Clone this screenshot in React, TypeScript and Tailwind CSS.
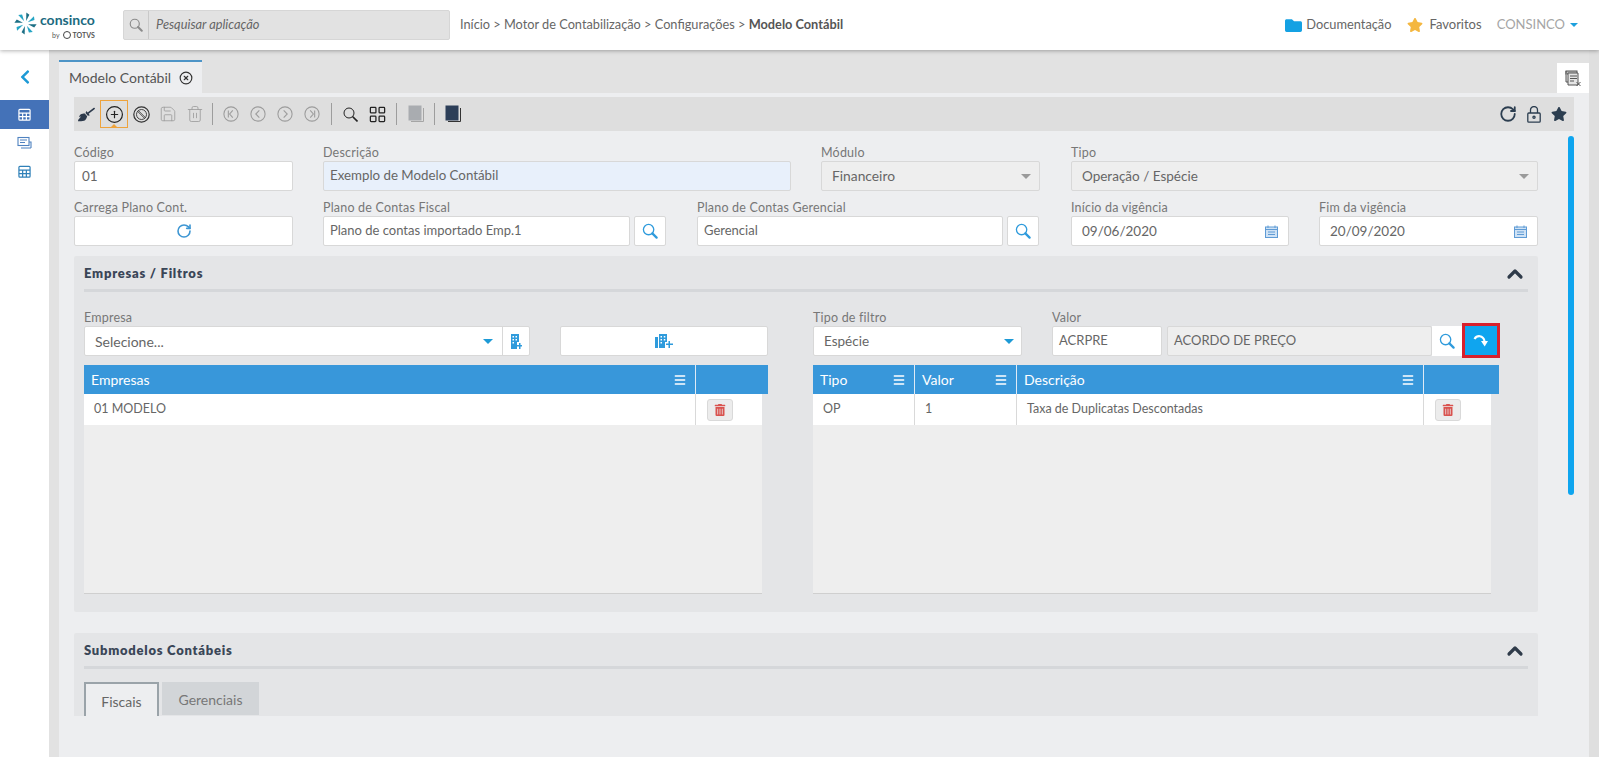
import { CirclePlus, CircleX, ChevronUp, LayoutGrid, Menu, RotateCw, Save, Trash2 } from "lucide-react";
import { FaBroom, FaChevronLeft, FaFolder, FaStar, FaTrashAlt } from "react-icons/fa";
import type { ReactNode } from "react";

const font = { fontFamily: "Lato, 'Open Sans', sans-serif" };

function Logo() {
  const rays = [0, 45, 90, 135, 180, 225, 270, 315];
  return (
    <div className="flex items-start gap-[3px] ml-[14px] w-[93px]">
      <svg width="23" height="23" viewBox="0 0 22 22" className="mt-[1px] shrink-0">
        {rays.map((r, i) => (
          <path
            key={r}
            d="M11 8.5 L9.2 0.5 L12.6 2 Z"
            fill={i % 2 ? "#25a5c4" : "#1d6f85"}
            transform={`rotate(${r + 14} 11 11)`}
          />
        ))}
      </svg>
      <div className="flex flex-col items-end -mt-[1px] leading-none">
        <span className="text-[14px] font-bold text-[#1c6a80] leading-[20px]">consinco</span>
        <span className="flex items-center gap-[2px] text-[7px] font-bold text-[#555] mt-[1px]">
          <span className="font-normal mr-[1px]">by</span>
          <span className="w-[8px] h-[8px] rounded-full border border-[#444]" />
          TOTVS
        </span>
      </div>
    </div>
  );
}

function SearchIcon({ color, size = 16 }: { color: string; size?: number }) {
  return (
    <svg width={size} height={size} viewBox="0 0 17 17" fill="none" stroke={color}>
      <circle cx="7" cy="7" r="5.5" strokeWidth="1.4" />
      <path d="M11 11 L15.5 15.5" strokeWidth="2.4" strokeLinecap="round" />
    </svg>
  );
}

function Header() {
  return (
    <header className="relative z-10 h-[50px] bg-white flex items-center shadow-[0_1px_4px_rgba(0,0,0,0.3)] shrink-0">
      <Logo />
      <div className="ml-[16px] w-[327px] h-[30px] flex items-center bg-[#e2e2e2] border border-[#d6d6d6] rounded-[2px]">
        <div className="w-[25px] h-full flex items-center justify-center border-r border-[#c9c9c9]">
          <SearchIcon color="#8b8b8b" size={14} />
        </div>
        <span className="ml-[7px] text-[12.8px] italic text-[#666]">Pesquisar aplicação</span>
      </div>
      <div className="ml-[10px] text-[12.75px] text-[#666]">
        Início &gt; Motor de Contabilização &gt; Configurações &gt;{" "}
        <span className="font-bold text-[#555]">Modelo Contábil</span>
      </div>
      <div className="ml-auto flex items-center text-[13px] text-[#666] pr-[21px]">
        <FaFolder size={17} className="text-[#14a1e3] mr-[4px]" />
        <span className="text-[12.8px]">Documentação</span>
        <FaStar size={16} className="text-[#f4b740] ml-[16px] mr-[6px]" />
        <span>Favoritos</span>
        <span className="ml-[15px] text-[#a5a5a5]">CONSINCO</span>
        <span className="ml-[5px] w-0 h-0 border-x-[4px] border-x-transparent border-t-[4px] border-t-[#1da0dd]" />
      </div>
    </header>
  );
}

function TableIcon({ color }: { color: string }) {
  return (
    <svg width="13" height="13" viewBox="0 0 14 14" fill="none" stroke={color} strokeWidth="1.3">
      <rect x="1" y="1.5" width="12" height="11.5" rx="1" />
      <path d="M1 5.5H13M1 9.2H13M5 5.5V13M9 5.5V13" />
    </svg>
  );
}

function Sidebar() {
  return (
    <aside className="w-[49px] shrink-0 bg-white flex flex-col">
      <div className="h-[50px] flex items-center justify-center">
        <FaChevronLeft size={16} className="text-[#1d9ad6] mt-[4px]" />
      </div>
      <div className="h-[29px] bg-[#4472b8] flex items-center justify-center">
        <TableIcon color="#ffffff" />
      </div>
      <div className="h-[28px] flex items-center justify-center">
        <svg width="15" height="14" viewBox="0 0 15 14" fill="none" stroke="#4f82c0" strokeWidth="1.1">
          <rect x="1" y="1.5" width="11" height="8" />
          <path d="M3 4H10M3 6.5H8M4 12H14M12 6H14V12" />
        </svg>
      </div>
      <div className="h-[28px] flex items-center justify-center">
        <TableIcon color="#2f80b8" />
      </div>
    </aside>
  );
}

function CircleNav({ kind }: { kind: "first" | "prev" | "next" | "last" }) {
  const d = {
    first: "M11 5 L7.5 9 L11 13 M6 5V13",
    prev: "M10.5 5 L6.5 9 L10.5 13",
    next: "M7.5 5 L11.5 9 L7.5 13",
    last: "M7 5 L10.5 9 L7 13 M12 5V13",
  }[kind];
  return (
    <svg width="16" height="16" viewBox="0 0 18 18" fill="none" stroke="#9c9c9c" strokeWidth="1.2">
      <circle cx="9" cy="9" r="8" />
      <path d={d} />
    </svg>
  );
}

function Sep({ left }: { left: string }) {
  return <span className={`block w-px h-[22px] bg-[#9d9d9d] ${left}`} />;
}

function Copies({ color, front, left }: { color: string; front: string; left: string }) {
  return (
    <svg width="17" height="18" viewBox="0 0 17 18" fill="none" stroke={color} strokeWidth="1" className={left}>
      <path d="M3 16.5H15.5V3" />
      <rect x="1" y="1" width="12" height="14" fill={front} stroke={front} />
    </svg>
  );
}

function Slot({ left, children }: { left: string; children: ReactNode }) {
  return <span className={`w-[16px] h-[18px] flex items-center justify-center ${left}`}>{children}</span>;
}

function Toolbar() {
  return (
    <div className="h-[34px] ml-[15px] w-[1500px] mt-[4px] bg-[#dedede] flex items-center pl-[4px] pr-[7px]">
      <FaBroom size={17} className="text-[#2d3a4c]" />
      <div className="relative ml-[5px] w-[28px] h-[28px] border border-[#eea33c] flex items-center justify-center">
        <CirclePlus size={19} strokeWidth={1.5} className="text-[#222]" />
        <span className="absolute bottom-0 left-[10px] w-0 h-0 border-x-[3px] border-x-transparent border-b-[3px] border-b-[#eea33c]" />
      </div>
      <svg width="17" height="17" viewBox="0 0 17 17" fill="none" stroke="#333" className="ml-[5px]">
        <circle cx="8.5" cy="8.5" r="7.7" strokeWidth="1.2" />
        <circle cx="8.5" cy="8.5" r="5" strokeWidth="0.9" />
        <path d="M4.6 5.4 L11.6 12.4 M5.4 4.6 L12.4 11.6" strokeWidth="0.8" />
      </svg>
      <Slot left="ml-[10px]">
        <Save size={18} strokeWidth={1.1} className="shrink-0 text-[#9c9c9c]" />
      </Slot>
      <Slot left="ml-[11px]">
        <Trash2 size={18} strokeWidth={1.1} className="shrink-0 text-[#9c9c9c]" />
      </Slot>
      <Sep left="ml-[9px]" />
      <span className="flex items-center gap-[11px] ml-[10px]">
        <CircleNav kind="first" />
        <CircleNav kind="prev" />
        <CircleNav kind="next" />
        <CircleNav kind="last" />
      </span>
      <Sep left="ml-[11px]" />
      <span className="ml-[11px]">
        <svg width="15" height="15" viewBox="0 0 15 15" fill="none" stroke="#222" className="block">
          <circle cx="6" cy="6" r="5" strokeWidth="1" />
          <path d="M9.5 9.5 L14.5 14.5" strokeWidth="1.6" />
        </svg>
      </span>
      <Slot left="ml-[11px]">
        <LayoutGrid size={19} strokeWidth={1.6} className="shrink-0 text-[#222]" />
      </Slot>
      <Sep left="ml-[11px]" />
      <Copies color="#a5a5a5" front="#a9acb0" left="ml-[11px]" />
      <Sep left="ml-[9px]" />
      <Copies color="#333" front="#2c3e58" left="ml-[10px]" />
      <div className="ml-auto flex items-center gap-[10px] text-[#2c3e50]">
        <RotateCw size={18} strokeWidth={2.4} />
        <svg width="14" height="17" viewBox="0 0 14 17" fill="none" stroke="currentColor" strokeWidth="1.3">
          <rect x="0.8" y="7" width="12.4" height="9.2" rx="1" />
          <path d="M3.5 7V4a3.5 3.5 0 0 1 7 0V7" />
          <circle cx="7" cy="11.2" r="1.1" />
        </svg>
        <FaStar size={16} />
      </div>
    </div>
  );
}

function Field({
  label,
  width,
  left,
  children,
}: {
  label: string;
  width: number | string;
  left?: string;
  children: ReactNode;
}) {
  return (
    <div className={`shrink-0 ${left ?? ""}`} style={{ width }}>
      <div className="text-[12.5px] text-[#777] h-[18px] leading-[20px] tracking-[0.2px]">{label}</div>
      {children}
    </div>
  );
}

function Box({
  children,
  className = "",
}: {
  children?: ReactNode;
  className?: string;
}) {
  return (
    <div
      className={`h-[30px] rounded-[2px] border border-[#d8d8d8] flex items-center text-[#666] ${className}`}
    >
      {children}
    </div>
  );
}

function SearchBtn() {
  return (
    <div className="w-[32px] h-[30px] bg-white border border-[#d8d8d8] rounded-[2px] flex items-center justify-center ml-[4px] shrink-0">
      <SearchIcon color="#2f9bdc" />
    </div>
  );
}

function Calendar() {
  return (
    <svg width="13" height="13" viewBox="0 0 13 13" className="ml-auto mr-[10px]" fill="#cfe2f5" stroke="#5f9bd5" strokeWidth="1">
      <rect x="0.5" y="2" width="12" height="10.5" />
      <path d="M0.5 4.5H12.5M3 0.5V3M10 0.5V3M3 7H10M3 9.5H10" />
    </svg>
  );
}

function Caret({ color = "#1d9ad6" }: { color?: string }) {
  return (
    <span
      className="block w-0 h-0 border-x-[5px] border-x-transparent border-t-[5px]"
      style={{ borderTopColor: color }}
    />
  );
}

function Building({ plus }: { plus?: boolean }) {
  return plus ? (
    <svg width="11" height="15" viewBox="0 0 11 15" fill="#2f9bdc">
      <path d="M0 0H8V8H6V15H0Z" />
      <path d="M1.5 2H3V3.5H1.5ZM4.5 2H6V3.5H4.5ZM1.5 5H3V6.5H1.5ZM4.5 5H6V6.5H4.5ZM1.5 8H3V9.5H1.5Z" fill="#fff" />
      <path d="M8 9V11H6V12.5H8V15H9.5V12.5H11V11H9.5V9Z" />
    </svg>
  ) : (
    <svg width="18" height="14" viewBox="0 0 18 14" fill="#2f9bdc">
      <path d="M0 3H3V14H0ZM4 0H12V8H10V14H4Z" />
      <path d="M5.5 2H7V3.5H5.5ZM8.8 2H10.3V3.5H8.8ZM5.5 5H7V6.5H5.5ZM8.8 5H10.3V6.5H8.8ZM5.5 8H7V9.5H5.5Z" fill="#fff" />
      <path d="M13.5 7V9.5H11V11H13.5V14H15V11H18V9.5H15V7Z" />
    </svg>
  );
}

function FormFields() {
  return (
    <div className="ml-[15px] w-[1464px]">
      <div className="flex mt-[12px]">
        <Field label="Código" width={219}>
          <Box className="bg-white pl-[7px] text-[13.5px]">01</Box>
        </Field>
        <Field label="Descrição" width={468} left="ml-[30px]">
          <Box className="bg-[#e8f0fb] pl-[6px] text-[#333] text-[13.3px]">Exemplo de Modelo Contábil</Box>
        </Field>
        <Field label="Módulo" width={219} left="ml-[30px]">
          <Box className="bg-[#eeeeee] pl-[10px] pr-[8px] justify-between text-[13.8px]">
            Financeiro
            <Caret color="#9a9a9a" />
          </Box>
        </Field>
        <Field label="Tipo" width={467} left="ml-[31px]">
          <Box className="bg-[#eeeeee] pl-[10px] pr-[8px] justify-between text-[13.5px]">
            Operação / Espécie
            <Caret color="#9a9a9a" />
          </Box>
        </Field>
      </div>
      <div className="flex mt-[7px]">
        <Field label="Carrega Plano Cont." width={219}>
          <Box className="bg-white justify-center">
            <RotateCw size={16} strokeWidth={2.4} className="text-[#3d96d3]" />
          </Box>
        </Field>
        <Field label="Plano de Contas Fiscal" width={343} left="ml-[30px]">
          <div className="flex">
            <Box className="bg-white pl-[6px] w-[307px] text-[13px]">Plano de contas importado Emp.1</Box>
            <SearchBtn />
          </div>
        </Field>
        <Field label="Plano de Contas Gerencial" width={342} left="ml-[31px]">
          <div className="flex">
            <Box className="bg-white pl-[6px] w-[306px] text-[13px]">Gerencial</Box>
            <SearchBtn />
          </div>
        </Field>
        <Field label="Início da vigência" width={218} left="ml-[32px]">
          <Box className="bg-white pl-[10px] text-[13.5px]">
            09/06/2020
            <Calendar />
          </Box>
        </Field>
        <Field label="Fim da vigência" width={219} left="ml-[30px]">
          <Box className="bg-white pl-[10px] text-[13.5px]">
            20/09/2020
            <Calendar />
          </Box>
        </Field>
      </div>
    </div>
  );
}

function PanelHead({ title }: { title: string }) {
  return (
    <div className="mx-[10px] h-[36px] pt-[3px] border-b-[3px] border-[#d5d7da] flex items-center justify-between">
      <span className="text-[13px] font-extrabold text-[#3a4657] tracking-[0.75px]">{title}</span>
      <ChevronUp size={24} strokeWidth={3.2} className="text-[#2f3b4a] mr-[1px]" />
    </div>
  );
}

function Th({ label, width, noMenu }: { label?: string; width: number | string; noMenu?: boolean }) {
  return (
    <div
      className="h-full flex items-center justify-between border-r border-[#dfeaf5] last:border-r-0 pl-[7px] pr-[8px] text-[14px] text-white shrink-0"
      style={{ width }}
    >
      <span>{label}</span>
      {!noMenu && <Menu size={14} strokeWidth={2.5} />}
    </div>
  );
}

function DelBtn() {
  return (
    <span className="w-[26px] h-[22px] rounded-[3px] bg-[#ececec] border border-[#d9d9d9] flex items-center justify-center">
      <FaTrashAlt size={12} className="text-[#d9534f]" />
    </span>
  );
}

function Td({ children, width }: { children?: ReactNode; width: number }) {
  return (
    <div
      className="h-full flex items-center border-r border-[#d9d9d9] shrink-0 text-[12.5px] text-[#666] pl-[10px]"
      style={{ width }}
    >
      {children}
    </div>
  );
}

function EmpresasPanel() {
  return (
    <section className="ml-[15px] mt-[10px] w-[1464px] h-[356px] bg-[#e4e5e7] rounded-[2px]">
      <PanelHead title="Empresas / Filtros" />
      <div className="flex mt-[16px] pl-[10px]">
        <div className="w-[684px]">
          <div className="flex">
            <Field label="Empresa" width={446}>
              <Box className="bg-white pl-[10px] pr-0 text-[14px]">
                Selecione...
                <span className="ml-auto mr-[9px]">
                  <Caret />
                </span>
                <span className="w-[27px] h-full border-l border-[#d8d8d8] flex items-center justify-center">
                  <Building plus />
                </span>
              </Box>
            </Field>
            <div className="ml-[30px] w-[208px] pt-[18px]">
              <Box className="bg-white justify-center">
                <Building />
              </Box>
            </div>
          </div>
          <div className="mt-[9px] h-[29px] bg-[#3897da] flex">
            <Th label="Empresas" width={612} />
            <Th width={72} noMenu />
          </div>
          <div className="w-[678px] h-[200px] bg-[#eeeeee] border-b border-[#cfcfcf]">
            <div className="h-[31px] bg-white flex">
              <Td width={612}>01 MODELO</Td>
              <div className="flex-1 flex items-center pl-[11px]">
                <DelBtn />
              </div>
            </div>
          </div>
        </div>
        <div className="ml-[45px] w-[686px]">
          <div className="flex h-[48px]">
            <Field label="Tipo de filtro" width={209}>
              <Box className="bg-white pl-[10px] pr-[7px] justify-between text-[13.5px]">
                Espécie
                <Caret />
              </Box>
            </Field>
            <Field label="Valor" width={110} left="ml-[30px]">
              <Box className="bg-white pl-[6px] text-[13px]">ACRPRE</Box>
            </Field>
            <div className="w-[265px] ml-[5px] pt-[18px] shrink-0">
              <Box className="bg-[#eeeeee] pl-[6px] text-[13px]">ACORDO DE PREÇO</Box>
            </div>
            <div className="pt-[18px] shrink-0">
              <div className="w-[30px] h-[30px] bg-white flex items-center justify-center">
                <SearchIcon color="#2f9bdc" />
              </div>
            </div>
            <div className="pt-[15px] shrink-0">
              <div className="w-[38px] h-[35px] bg-[#0fa5ef] border-[3px] border-[#d8202c] flex items-center justify-center">
                <svg width="16" height="14" viewBox="0 0 16 14" fill="none">
                  <path d="M1.5 5 C4 1 10 1 11.5 7" stroke="#fff" strokeWidth="2.2" />
                  <path d="M8 7 H15 L11.7 12.5 Z" fill="#fff" />
                </svg>
              </div>
            </div>
          </div>
          <div className="mt-[9px] h-[29px] bg-[#3897da] flex">
            <Th label="Tipo" width={102} />
            <Th label="Valor" width={102} />
            <Th label="Descrição" width={407} />
            <Th width={75} noMenu />
          </div>
          <div className="w-[678px] h-[200px] bg-[#eeeeee] border-b border-[#cfcfcf]">
            <div className="h-[31px] bg-white flex">
              <Td width={102}>OP</Td>
              <Td width={102}>1</Td>
              <Td width={407}>Taxa de Duplicatas Descontadas</Td>
              <div className="flex-1 flex items-center pl-[11px]">
                <DelBtn />
              </div>
            </div>
          </div>
        </div>
      </div>
    </section>
  );
}

function SubmodelosPanel() {
  return (
    <section className="ml-[15px] mt-[21px] w-[1464px] h-[83px] bg-[#e4e5e7] rounded-t-[2px] overflow-hidden">
      <PanelHead title="Submodelos Contábeis" />
      <div className="flex items-start mx-[10px] mt-[13px] gap-[3px]">
        <div className="w-[75px] h-[40px] border-2 border-b-0 border-[#9aa3a9] bg-[#edeef0] text-[14px] text-[#666] flex justify-center pt-[7px]">
          Fiscais
        </div>
        <div className="w-[97px] h-[33px] bg-[#d2d5d8] text-[14px] text-[#777] flex justify-center pt-[7px]">
          Gerenciais
        </div>
      </div>
    </section>
  );
}

export default function App() {
  return (
    <div className="w-[1599px] h-[757px] overflow-hidden flex flex-col bg-white" style={font}>
      <Header />
      <div className="flex flex-1 min-h-0">
        <Sidebar />
        <div className="w-[10px] shrink-0 bg-[#e2e2e2]" />
        <main className="relative w-[1530px] shrink-0 bg-[#edeef0]">
          <div className="h-[43px] bg-[#e2e2e2] flex items-end">
            <div className="w-[143px] h-[33px] bg-[#edeef0] border-t-2 border-[#4d94c7] flex items-center pl-[10px] text-[14px] text-[#555]">
              Modelo Contábil
              <CircleX size={14} strokeWidth={2} className="ml-[8px] text-[#333]" />
            </div>
          </div>
          <Toolbar />
          <FormFields />
          <EmpresasPanel />
          <SubmodelosPanel />
          {/* scrollbar thumb and the close-all tab button sit over the content */}
          <div className="absolute left-[1509px] top-[86px] w-[6px] h-[359px] rounded-[3px] bg-[#0ea5ef]" />
          <div className="absolute left-[1498px] top-[13px] w-[32px] h-[30px] bg-white flex items-center justify-center">
            <svg width="17" height="17" viewBox="0 0 17 17" fill="none" stroke="#555" strokeWidth="1">
              <rect x="1" y="1" width="11" height="3" fill="#bbb" />
              <path d="M1 1V12H3M3 3H13V15H3Z" fill="#e4e4e4" />
              <path d="M5 6H12M5 8.5H12M5 11H9M11.5 12L15.5 16M15.5 12L11.5 16" />
            </svg>
          </div>
        </main>
        <div className="w-[10px] shrink-0 bg-[#dfdfdf]" />
      </div>
    </div>
  );
}
